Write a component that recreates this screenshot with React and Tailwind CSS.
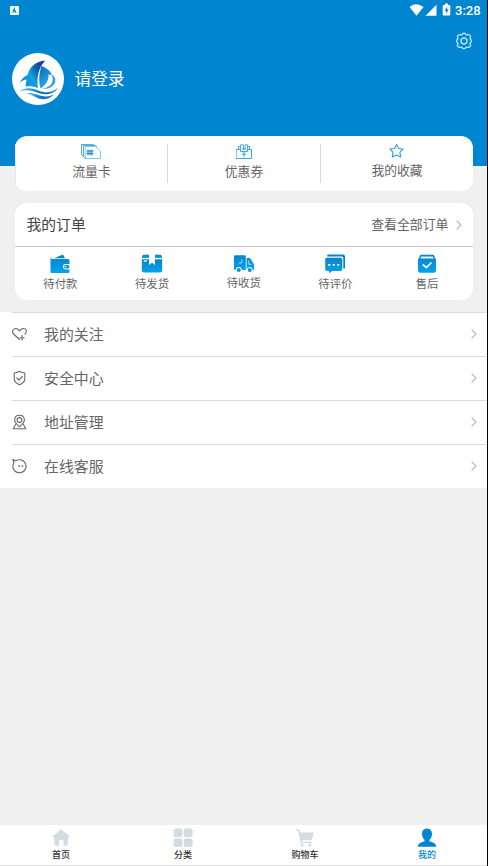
import React from 'react';

const stroke = { fill: 'none', strokeLinecap: 'round', strokeLinejoin: 'round' };

function Logo() {
  return (
    <svg className="block h-[52px] w-[52px]" viewBox="0 0 52 52">
      <defs>
        <linearGradient id="sail" x1="0" y1="0.7" x2="1" y2="0.1">
          <stop offset="0" stopColor="#0a8fd8" />
          <stop offset="0.4" stopColor="#12a0e2" />
          <stop offset="0.65" stopColor="#0b62b0" />
          <stop offset="1" stopColor="#2b2a86" />
        </linearGradient>
        <linearGradient id="sail2" x1="0" y1="0" x2="0.5" y2="1">
          <stop offset="0" stopColor="#0b6cba" />
          <stop offset="1" stopColor="#22aeea" />
        </linearGradient>
        <linearGradient id="wave" x1="0" y1="0" x2="1" y2="0">
          <stop offset="0" stopColor="#5cc4f0" />
          <stop offset="0.6" stopColor="#0c6fc0" />
          <stop offset="1" stopColor="#1689d2" />
        </linearGradient>
      </defs>
      <circle cx="26" cy="26" r="26" fill="#fff" />
      <path d="M33 7.500C24 8.500 17.500 13.500 15.500 22C12 23.500 9.500 26 8 29.500C10.500 27.500 12.500 26.500 14.500 26.500L13.500 33.500C18 33 22 33.500 26 35C24.500 25 26 16 33 7.500Z" fill="url(#sail)" />
      <path d="M29.500 13C34 14.500 38.500 18 40 22L36.500 21.500C37 27 34 32 28.500 35.500C26.500 28 27 20 29.500 13Z" fill="url(#sail2)" />
      <path d="M39 21.200C44.500 23.500 44.500 29 41 32.500C38 35.500 34 36.200 30 36C36 34.500 40 32 40.500 28C41 25.500 40.500 23 39 21.200Z" fill="#2ba4e2" />
      <path d="M7 38.500C14 33.500 21 35 27 37.800C34 40.500 40 39.500 46 35C42 41 35 42.500 27 40.200C20 37.500 14 36 7 38.500Z" fill="url(#wave)" />
      <path d="M13 40.500C20 38.500 25 42 30 43C34 44 38 43.200 42 41.500C38 46.500 30 47.500 25 44.800C21 42.500 17 40.500 13 40.500Z" fill="url(#wave)" />
    </svg>
  );
}

function StatusBar() {
  return (
    <div className="flex h-5 items-center pl-[10px] pr-[6px] pt-px">
      <svg className="h-[9px] w-[9px]" viewBox="0 0 9 9">
        <rect width="9" height="9" rx="1" fill="#fff" />
        <path d="M2.700 6.700L4.300 2.500L5.900 6.700M3.300 5.300H5.300" stroke="#0086d1" strokeWidth="1.100" fill="none" />
      </svg>
      <svg className="-mt-px ml-auto h-[14px] w-[44px]" viewBox="0 0 44 14" fill="#fff">
        <path d="M-.5 4Q6.500 -1.500 13.500 4L6.500 12.700Z" />
        <path d="M26.500 1.700V12.700H15.500Z" />
        <path d="M33.500 2H35V.5H38V2H39.500Q40.300 2 40.300 2.800V11.600Q40.300 12.400 39.500 12.400H33.500Q32.700 12.400 32.700 11.600V2.800Q32.700 2 33.500 2Z" />
        <path d="M37.300 3.500L34.500 7.700H36.200V10.800L38.700 6.500H37.100Z" fill="#0086d1" />
      </svg>
      <span className="ml-px w-[26px] whitespace-nowrap font-['Roboto',sans-serif] text-[13px] font-medium leading-5 text-white">3:28</span>
    </div>
  );
}

function Gear() {
  return (
    <svg className="h-[18px] w-[18px]" viewBox="0 0 18 18" {...stroke} stroke="#b9e0f5" strokeWidth="1.400">
      <path d="M6.700 2.700Q9 -.3 11.300 2.700Q15.900 2.200 15.500 5.200L15 6.800Q17.800 9 15 11.200L15.500 12.800Q15.900 15.800 11.300 15.300Q9 18.300 6.700 15.300Q2.100 15.800 2.500 12.800L3 11.200Q.2 9 3 6.800L2.500 5.200Q2.100 2.200 6.700 2.700Z" />
      <circle cx="9" cy="9" r="3" />
    </svg>
  );
}

const quick = [
  {
    label: '流量卡',
    icon: (
      <svg className="-ml-px h-4 w-5" viewBox="0 0 20 16" {...stroke} stroke="#37a9df">
        <path d="M4.500 2.500H14.500L19.500 7V14.500H4.500Z" stroke="#7ccbee" />
        <path d="M2.500 12.500V1.500H13.500M.5 10.500V.5H12.500L15.500 2.500M.5 10.500L4.500 14.500" strokeWidth="0.900" />
        <path d="M6 7H12M6 9.500H12M7 6V11M9 6V11M11 6V11" stroke="#1590cf" strokeWidth="1.100" />
      </svg>
    ),
  },
  {
    label: '优惠券',
    icon: (
      <svg className="h-4 w-4" viewBox="0 0 16 16" {...stroke} stroke="#37a9df">
        <path d="M2.500 5V2.500H4.500M13.500 5V2.500H11.500M.5 5.500H4.500V7.500H11.500V5.500H15.500V14.500H.5Z" />
        <path d="M4.500 5.500V.8H7.500V5.500M11.500 5.500V.8H9V5.500M6 5H10M6.500 8L8 9.500L9.500 8M6.500 10.500H9.500M8 9.500V13" strokeWidth="0.900" />
      </svg>
    ),
  },
  {
    label: '我的收藏',
    icon: (
      <svg className="-mt-px h-4 w-4" viewBox="0 0 16 16" {...stroke} stroke="#27a0df" strokeWidth="1.100">
        <path d="M7.500 1.500L9.500 5.500L14 6L10.900 9.300L11.700 14L7.500 12L3.300 14L4.100 9.300L1 6L5.500 5.500Z" />
      </svg>
    ),
  },
];

const orders = [
  {
    label: '待付款',
    icon: (
      <svg className="h-5 w-5" viewBox="0 0 20 20">
        <path d="M4 4.200L13 .5L15 4.200Z" fill="#0785cc" />
        <path d="M.5 2.800V17.800Q.5 19 1.700 19H18.300Q19.500 19 19.500 17.800V15.500H15.500Q12.800 15 12.800 12.700Q13 10 15.500 10H19.500V6.500Q19.500 5 18 5H2.500Q.5 5 .5 2.800Z" fill="url(#order)" />
        <rect x="13.900" y="11" width="5.600" height="3.500" rx="1.700" fill="#0699e0" />
        <circle cx="15.500" cy="12.800" r=".8" fill="#fff" />
      </svg>
    ),
  },
  {
    label: '待发货',
    icon: (
      <svg className="h-5 w-[22px]" viewBox="0 0 22 20" fill="url(#order)">
        <path d="M2.500 .8H8V4H.8Q1 1 2.500 .8ZM14 .8H19.500Q21 1 21.200 4H14Z" />
        <path d="M.8 5.200H8V11L11 8.700L14 11V5.200H21.200V16.500Q21.200 18.500 19 18.500H3Q.8 18.500 .8 16.500Z" />
        <path d="M2.800 7H6" stroke="#fff" strokeWidth="1.300" />
      </svg>
    ),
  },
  {
    label: '待收货',
    up: true,
    icon: (
      <svg className="h-5 w-[22px]" viewBox="0 0 22 20">
        <path d="M2.300 1.200H11.500Q12.800 1.200 12.800 2.500V16H9Q8.500 13 5.800 13Q3 13 2.600 16H2.300Q1 16 1 14.700V2.500Q1 1.200 2.300 1.200ZM13.600 4H16Q17.500 4 18 5.500L21 10.500V16H19.800Q19.400 13 17 13Q14.300 13 13.600 15.500Z" fill="url(#order)" />
        <circle cx="5.800" cy="16" r="2" fill="#0895dc" />
        <circle cx="16.800" cy="16" r="2" fill="#0895dc" />
        <path d="M8.800 5.500V9H5.800M15.700 6.500V10.300H18.500" stroke="#b5e2f7" strokeWidth="0.900" fill="none" />
      </svg>
    ),
  },
  {
    label: '待评价',
    icon: (
      <svg className="h-5 w-[22px]" viewBox="0 0 22 20">
        <path d="M4.500 .6H19Q21 .6 21 2.600V14.500H19.300V4.200Q19.300 2.500 17.500 2.500H3Q3 .6 4.500 .6Z" fill="#0785cc" />
        <path d="M3 3.700H16.500Q18.300 3.700 18.300 5.500V15Q18.300 17 16.500 17H8L5.500 19.300L4.800 17H3Q1.200 17 1.200 15V5.500Q1.200 3.700 3 3.700Z" fill="url(#order)" />
        <path d="M4.300 10.800H6.300M8.800 10.800H10.800M13.300 10.800H15.300" stroke="#fff" strokeWidth="1.800" />
      </svg>
    ),
  },
  {
    label: '售后',
    icon: (
      <svg className="h-5 w-5" viewBox="0 0 20 20">
        <path d="M3.500 .8H16.500L19 5.500V16.500Q19 18.700 16.800 18.700H3.200Q1 18.700 1 16.500V5.500Z" fill="url(#order)" />
        <path d="M4.300 2.500H15.700L16.800 4.600H3.200Z" fill="#e4f5fd" />
        <path d="M6.300 11L9.300 13.600L14 9" {...stroke} stroke="#fff" strokeWidth="1.700" />
      </svg>
    ),
  },
];

const rows = [
  {
    label: '我的关注',
    icon: <><path d="M7.500 13.500L2 8.500Q-.2 6.300 1 4Q2.200 2.200 4.200 2.500Q6 2.800 7.500 5Q9 2.800 11 2.500Q13.300 2.200 14.200 4Q14.800 6.200 13 8.300" /><path d="M10 9.500V14M7.800 11.700H12.200" /></>,
  },
  {
    label: '安全中心',
    icon: <><path d="M7.500 1.300Q10 3 12.800 3V9.200Q12.700 12.200 7.500 14.800Q2.300 12.200 2.200 9.200V3Q5 3 7.500 1.300Z" /><path d="M4.800 8L7 10L10.500 6.300" /></>,
  },
  {
    label: '地址管理',
    icon: <><path d="M7.500 12.700Q2.600 8.700 2.600 6Q2.800 1.300 7.500 1.300Q12.200 1.300 12.400 6Q12.400 8.700 7.500 12.700Z" /><circle cx="7.500" cy="6" r="2.400" /><path d="M3.600 10.500L1.200 14.700H13.800L11.400 10.500" /></>,
  },
  {
    label: '在线客服',
    icon: <><path d="M.8 1.500L3.500 2.800Q7.500 .5 11.500 3Q15 6.300 13.700 10.300Q12 14.700 7.500 14.700Q2.500 14.500 1 10Q.5 6.800 2 4.500Z" /><path d="M7 8H7.300M10.200 8H10.500" strokeWidth="1.700" /></>,
  },
];

const tabs = [
  {
    label: '首页',
    icon: <path d="M10 1.300L19.500 9H17V16Q17 17.700 15.300 17.700H12.500V12H8V17.700H5Q3.300 17.700 3.300 16V9H.7Z" />,
  },
  {
    label: '分类',
    icon: <><rect x=".6" y=".6" width="8.800" height="8.600" rx="2.200" /><rect x="10.800" y=".6" width="8.800" height="8.600" rx="2.200" /><rect x=".6" y="10.500" width="8.800" height="8.600" rx="2.200" /><rect x="10.800" y="10.500" width="8.800" height="8.600" rx="2.200" /></>,
  },
  {
    label: '购物车',
    icon: <><path d="M1 1.200H4L5.300 4.500H19L16.500 12.300H6.500L6.800 13.800H17V15H5.600L3 2.700H1Z" /><circle cx="7" cy="17" r="1.600" /><circle cx="14.700" cy="17" r="1.600" /></>,
  },
  {
    label: '我的',
    active: true,
    icon: <path d="M10 .6Q15.200 .8 15 6.500Q14.700 10 12.500 11.800V13.200Q19.500 14.700 19.200 18.700H.8Q.5 14.700 7.500 13.200V11.800Q5.300 10 5 6.500Q4.800 .8 10 .6Z" />,
  },
];

function Chevron() {
  return (
    <svg className="block h-[10px] w-[6px]" viewBox="0 0 6 10" {...stroke} stroke="#bdbdbd" strokeWidth="1.200">
      <path d="M1 1L5 5L1 9" />
    </svg>
  );
}

export default function App() {
  return (
    <div className="flex h-[866px] w-[488px] flex-col overflow-hidden border-r border-black bg-[#f0f0f0] font-['Noto_Sans_CJK_SC',sans-serif]">
      <svg className="absolute h-0 w-0">
        <defs>
          <linearGradient id="order" x1="0" y1="0" x2="0" y2="1">
            <stop offset="0" stopColor="#0784cb" />
            <stop offset="1" stopColor="#05a3ea" />
          </linearGradient>
        </defs>
      </svg>
      <header className="h-[166px] shrink-0 bg-[#0086d1]">
        <StatusBar />
        <div className="flex h-[33px] justify-end pr-[14px] pt-[12px]"><Gear /></div>
        <div className="flex items-center gap-[10.500px] pl-3">
          <Logo />
          <span className="-mt-[2px] text-[16.7px] leading-[52px] text-white">请登录</span>
        </div>
      </header>

      <section className="ml-[15px] -mt-[30px] flex h-[55px] w-[458px] shrink-0 rounded-xl bg-white py-2">
        {quick.map((q) => (
          <div key={q.label} className="flex w-[152px] flex-col items-center border-l border-[#d8d8d8] first:border-[#e8e8e8] last:w-[153px] nth-2:w-[153px]">
            {q.icon}
            <span className="mt-[2px] text-[12.8px] leading-[18px] text-[#666]">{q.label}</span>
          </div>
        ))}
      </section>

      <section className="ml-[15px] mt-3 h-[97px] w-[458px] shrink-0 rounded-xl bg-white">
        <div className="flex h-11 items-center border-b border-[#ccc] pl-[11.500px] pr-[11px]">
          <span className="text-[14.8px] text-[#444]">我的订单</span>
          <span className="-mt-px ml-auto mr-[7.500px] text-[12.9px] text-[#666]">查看全部订单</span>
          <Chevron />
        </div>
        <div className="-ml-[0.5px] flex pt-[7px]">
          {orders.map((o) => (
            <div key={o.label} className="flex w-1/5 flex-col items-center">
              {o.icon}
              <span className={o.up ? 'text-[11.4px] leading-[17px] text-[#666]' : 'mt-px text-[11.4px] leading-[17px] text-[#666]'}>{o.label}</span>
            </div>
          ))}
        </div>
      </section>

      <section className="mt-3 shrink-0 bg-white pl-3">
        {rows.map((r) => (
          <div key={r.label} className="flex h-11 items-center border-t border-[#dadada] pb-px pr-[10px]">
            <svg className="h-4 w-4" viewBox="0 0 16 16" {...stroke} stroke="#666" strokeWidth="1.100">{r.icon}</svg>
            <span className="ml-4 text-[14.9px] leading-5 text-[#666]">{r.label}</span>
            <span className="ml-auto"><Chevron /></span>
          </div>
        ))}
      </section>

      <nav className="-mr-px mt-auto flex h-[41px] w-[488px] shrink-0 border-b border-[#ddd] bg-white pt-[3px] shadow-[inset_-1px_0_0_#000]">
        {tabs.map((t) => (
          <div key={t.label} className="flex w-1/4 flex-col items-center">
            <svg className={t.active ? 'h-5 w-5 fill-[#0086d1]' : 'h-5 w-5 fill-[#d3dce1]'} viewBox="0 0 20 20">{t.icon}</svg>
            <span className={t.active ? 'text-[9px] font-medium leading-[14px] text-[#0086d1]' : 'text-[9px] font-medium leading-[14px] text-[#333]'}>{t.label}</span>
          </div>
        ))}
      </nav>
    </div>
  );
}
